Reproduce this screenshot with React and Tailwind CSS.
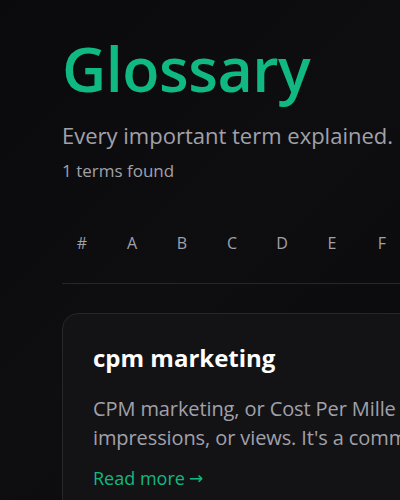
const letters = ["#", "A", "B", "C", "D", "E", "F", "G", "H", "I", "J", "K"];

const terms = [
  {
    title: "cpm marketing",
    lines: [
      "CPM marketing, or Cost Per Mille marketing, is a pricing model where advertisers pay for every thousand",
      "impressions, or views. It's a common way to buy display advertising space online.",
    ],
  },
];

export default function App() {
  return (
    <div
      className="w-[400px] h-[500px] overflow-hidden bg-[linear-gradient(135deg,#0a0a0d_0%,#0e0e11_50%,#0a0a0d_100%)]"
      style={{ fontFamily: '"Open Sans", "Noto Sans", sans-serif' }}
    >
      <div className="w-[900px] pl-[62px] pt-[33px]">
        <h1 className="text-[61px] leading-[72px] font-semibold text-[#10b981] tracking-[-0.5px]">
          Glossary
        </h1>
        <p className="mt-[16px] text-[22px] leading-[28px] text-[#a1a1aa]">
          Every important term explained.
        </p>
        <p className="mt-[10px] text-[17px] leading-[24px] text-[#a1a1aa]">
          {terms.length} terms found
        </p>

        <div className="mt-[40px] flex gap-[10px]">
          {letters.map((l) => (
            <button
              key={l}
              className="w-10 h-10 flex items-center justify-center text-[16px] text-[#a1a1aa]"
            >
              {l}
            </button>
          ))}
        </div>

        <div className="mt-[20px] border-t border-[#27272a]" />

        <div className="mt-[29px] space-y-6">
          {terms.map((t) => (
            <div
              key={t.title}
              className="w-[760px] rounded-2xl border border-[#27272a] bg-[#131316] px-[30px] pt-[28px] pb-8"
            >
              <h2 className="text-[24px] leading-[32px] font-bold text-white">
                {t.title}
              </h2>
              <p className="mt-[20px] text-[20px] leading-[29px] text-[#a1a1aa] whitespace-nowrap tracking-[-0.1px]">
                {t.lines[0]}
                <br />
                {t.lines[1]}
              </p>
              <a className="mt-[12px] inline-flex items-center gap-1 text-[18px] leading-[28px] text-[#10b981]">
                Read more
                <span style={{ fontFamily: '"DejaVu Sans", sans-serif' }} className="text-[17px]">→</span>
              </a>
            </div>
          ))}
        </div>
      </div>
    </div>
  );
}
